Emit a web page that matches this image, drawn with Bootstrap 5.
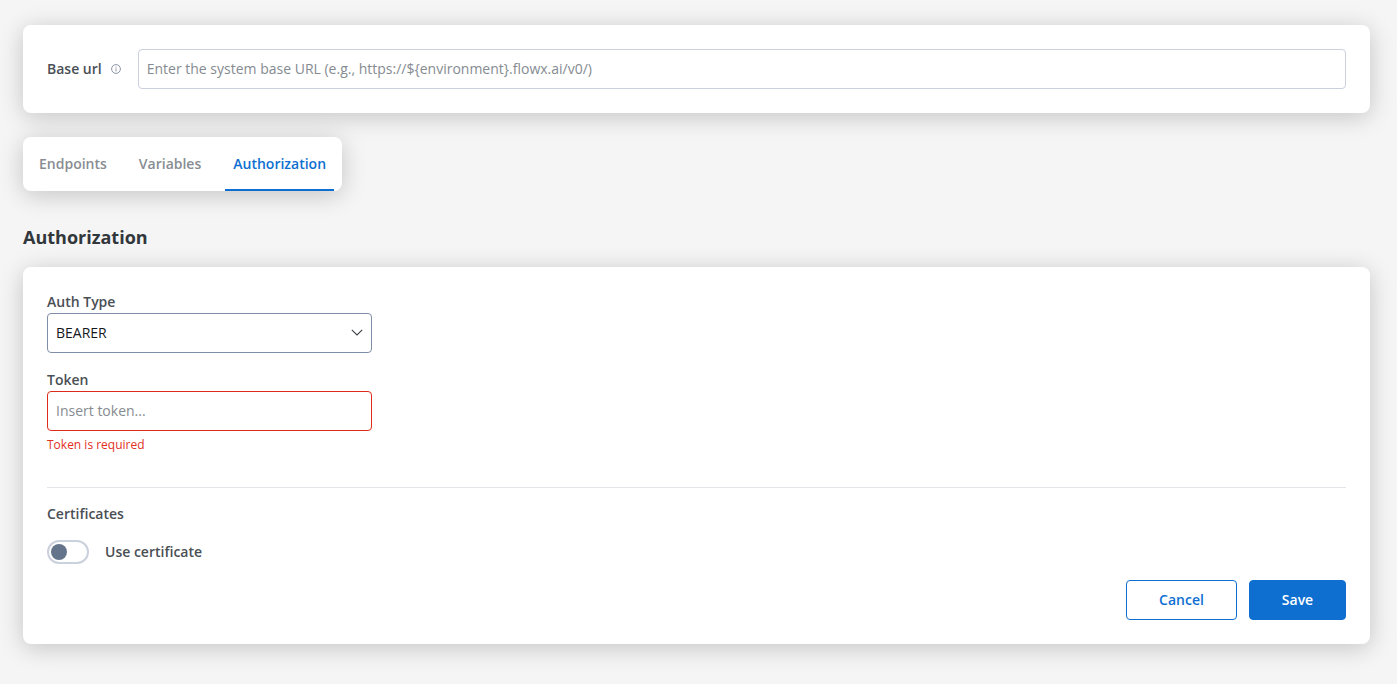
<!DOCTYPE html>
<html lang="en">
<head>
<meta charset="utf-8">
<title>Authorization</title>
<link href="https://cdn.jsdelivr.net/npm/bootstrap@5.3.0/dist/css/bootstrap.min.css" rel="stylesheet">
<style>
body { background:#f5f5f5; font-family:"Open Sans","Noto Sans",sans-serif; font-size:14px; color:#32373c; height:684px; overflow:hidden; }
.page-wrap { padding:25px 27px 0 23px; }
.panel { background:#fff; border-radius:8px; box-shadow:0 4px 24px rgba(0,0,0,.2); }
.url-panel { height:88px; padding:24px; }
.fx-label { font-weight:600; font-size:14px; line-height:20px; color:#4a4f55; margin:0; white-space:nowrap; }
.info-ico { width:10px; height:10px; margin-left:9px; margin-right:17px; flex:none; }
.fx-input { height:40px; border:1px solid #cbd0dd; border-radius:4px; padding:0 8px 2px; font-size:14px; color:#32373c; width:100%; background:#fff; outline:none; }
.fx-input::placeholder { color:#858b91; opacity:1; }
.tab-strip { margin-top:24px; height:54px; width:319px; padding:0 8px; }
.tab-item { color:#888d92; font-weight:600; font-size:14px; line-height:20px; padding:17px 8px 15px; text-decoration:none; display:block; height:54px; margin-right:16px; }
.tab-item:last-child { margin-right:0; }
.tab-item.is-on { color:#0e6fd1; border-bottom:2px solid #0e6fd1; }
.sec-title { font-size:18px; font-weight:700; line-height:24px; margin:34px 0 18px; color:#32373c; }
.form-panel { height:377px; padding:25px 24px 24px; }
.field-box { width:325px; }
.fx-select { height:40px; border:1px solid #7f8ea6; border-radius:4px; padding:0 8px 2px; font-size:14px; color:#16191c; }
.field-lbl { display:block; font-weight:600; font-size:14px; line-height:20px; margin:0 0 1px; color:#4a4f55; }
.token-lbl { margin-top:17px; }
.is-bad { border-color:#dc2b1a; }
.err-text { color:#e1301e; font-size:12px; line-height:16px; margin-top:6px; }
.divider { border-top:1px solid #e3e5e8; margin-top:34px; }
.cert-title { font-weight:600; font-size:14px; line-height:20px; margin-top:16px; color:#4a4f55; }
.switch-row { margin-top:16px; height:24px; }
.switch-track { width:42px; height:24px; border:2px solid #cbd0dd; border-radius:12px; background:#fff; padding:2px 0 0 2px; flex:none; }
.switch-knob { width:16px; height:16px; border-radius:50%; background:#64748b; display:block; }
.switch-txt { font-weight:600; margin-left:16px; color:#4a4f55; line-height:20px; }
.act-row { margin-top:16px; gap:12px; }
.fx-btn { height:40px; font-weight:600; font-size:14px; border-radius:4px; padding:0 0 2px; }
.btn-cancel { width:111px; background:#fff; color:#0e6fd1; border:1px solid #0e6fd1; }
.btn-save { width:97px; background:#0e6fd1; color:#fff; border:1px solid #0e6fd1; }
</style>
</head>
<body>
<div class="page-wrap">
  <div class="panel url-panel d-flex align-items-center">
    <label class="fx-label" for="baseUrl">Base url</label>
    <svg class="info-ico" viewBox="0 0 10 10" fill="none" stroke="#8a94a6" stroke-width="1"><circle cx="5" cy="5" r="4.4"/><path d="M5 4.4V7.4M5 2.6v1"/></svg>
    <input id="baseUrl" class="fx-input flex-grow-1" placeholder="Enter the system base URL (e.g., https://${environment}.flowx.ai/v0/)">
  </div>

  <nav class="panel tab-strip d-flex">
    <a class="tab-item" href="#">Endpoints</a>
    <a class="tab-item" href="#">Variables</a>
    <a class="tab-item is-on" href="#">Authorization</a>
  </nav>

  <h2 class="sec-title">Authorization</h2>

  <div class="panel form-panel">
    <div class="field-box">
      <label class="field-lbl">Auth Type</label>
      <div class="fx-select d-flex align-items-center justify-content-between">
        <span>BEARER</span>
        <svg width="12" height="7" viewBox="0 0 12 7" fill="none" stroke="#3c4146" stroke-width="1.1"><path d="M.8.8 6 6l5.2-5.2"/></svg>
      </div>
      <label class="field-lbl token-lbl" for="tok">Token</label>
      <input id="tok" class="fx-input is-bad" placeholder="Insert token...">
      <div class="err-text">Token is required</div>
    </div>
    <div class="divider"></div>
    <div class="cert-title">Certificates</div>
    <div class="switch-row d-flex align-items-center">
      <span class="switch-track"><span class="switch-knob"></span></span>
      <span class="switch-txt">Use certificate</span>
    </div>
    <div class="act-row d-flex justify-content-end">
      <button class="btn fx-btn btn-cancel" type="button">Cancel</button>
      <button class="btn fx-btn btn-save" type="button">Save</button>
    </div>
  </div>
</div>
<script src="https://cdn.jsdelivr.net/npm/bootstrap@5.3.0/dist/js/bootstrap.bundle.min.js"></script>
</body>
</html>
